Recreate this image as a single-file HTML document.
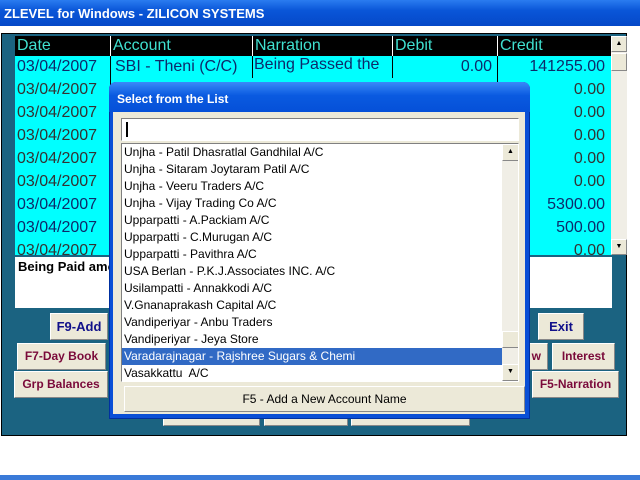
<!DOCTYPE html>
<html><head><style>
*{margin:0;padding:0;box-sizing:border-box}
body{width:640px;height:480px;position:relative;overflow:hidden;background:#fff;font-family:"Liberation Sans",sans-serif}
.a{position:absolute}
.title{left:0;top:0;width:640px;height:26px;background:linear-gradient(#2a7cf0,#0a56d8 40%,#0548c8);color:#fff;font-weight:bold;font-size:13px;padding:6px 0 0 4px}
.panel{left:1px;top:33px;width:626px;height:403px;background:#1b6381;border:1px solid #000}
.grid{left:15px;top:36px;width:596px;height:219px;background:#00ffff;overflow:hidden}
.hd{top:0;height:20px;background:#000;color:#40e0d0;font-size:16px;padding:1px 0 0 2px;border-left:1px solid #fff}
.c{font-size:16px;color:#0d2a6a}
.btn{background:#ece9d8;border:1px solid;border-color:#fff #888 #888 #fff;font-weight:bold;font-size:12px;text-align:center;color:#7a0a3a}
.sb{background:#f0eee6}
.arr{background:#ece9d8;border:1px solid;border-color:#fff #888 #888 #fff;font-size:7px;text-align:center;line-height:14px}
.li{left:0;width:380px;height:17px;font-size:12px;padding:1px 0 0 2px;color:#000;white-space:nowrap}
</style></head><body>
<div class="a title">ZLEVEL for Windows - ZILICON SYSTEMS</div>
<div class="a panel"></div>
<div class="a grid">
 <div class="a hd" style="left:0;width:95px;border-left:0">Date</div>
 <div class="a hd" style="left:95px;width:142px">Account</div>
 <div class="a hd" style="left:237px;width:140px">Narration</div>
 <div class="a hd" style="left:377px;width:105px">Debit</div>
 <div class="a hd" style="left:482px;width:114px">Credit</div>
 <div class="a" style="left:95px;top:20px;width:1px;height:199px;background:#000"></div>
 <div class="a" style="left:237px;top:20px;width:1px;height:22px;background:#000"></div>
 <div class="a" style="left:377px;top:20px;width:1px;height:22px;background:#000"></div>
 <div class="a" style="left:482px;top:20px;width:1px;height:199px;background:#000"></div>
 <div class="a c" style="left:2px;top:22px">03/04/2007</div>
 <div class="a c" style="left:100px;top:22px">SBI - Theni (C/C)</div>
 <div class="a c" style="left:239px;top:20px">Being Passed the</div>
 <div class="a c" style="left:377px;top:22px;width:100px;text-align:right">0.00</div>
 <div class="a c" style="left:482px;top:22px;width:108px;text-align:right">141255.00</div>
 <div class="a c" style="left:2px;top:45px;color:#333">03/04/2007</div>
 <div class="a c" style="left:2px;top:68px;color:#333">03/04/2007</div>
 <div class="a c" style="left:2px;top:91px;color:#333">03/04/2007</div>
 <div class="a c" style="left:2px;top:114px;color:#333">03/04/2007</div>
 <div class="a c" style="left:2px;top:137px;color:#333">03/04/2007</div>
 <div class="a c" style="left:2px;top:160px;color:#0d2a6a">03/04/2007</div>
 <div class="a c" style="left:2px;top:183px;color:#0d2a6a">03/04/2007</div>
 <div class="a c" style="left:2px;top:206px;color:#333">03/04/2007</div>
 <div class="a c" style="left:482px;top:45px;width:108px;text-align:right;color:#333">0.00</div>
 <div class="a c" style="left:482px;top:68px;width:108px;text-align:right;color:#333">0.00</div>
 <div class="a c" style="left:482px;top:91px;width:108px;text-align:right;color:#333">0.00</div>
 <div class="a c" style="left:482px;top:114px;width:108px;text-align:right;color:#333">0.00</div>
 <div class="a c" style="left:482px;top:137px;width:108px;text-align:right;color:#333">0.00</div>
 <div class="a c" style="left:482px;top:160px;width:108px;text-align:right">5300.00</div>
 <div class="a c" style="left:482px;top:183px;width:108px;text-align:right">500.00</div>
 <div class="a c" style="left:482px;top:206px;width:108px;text-align:right;color:#333">0.00</div>
</div>
<div class="a sb" style="left:611px;top:36px;width:16px;height:219px"></div>
<div class="a arr" style="left:611px;top:36px;width:16px;height:16px">▲</div>
<div class="a arr" style="left:611px;top:53px;width:16px;height:18px"></div>
<div class="a arr" style="left:611px;top:239px;width:16px;height:16px">▼</div>
<div class="a" style="left:15px;top:257px;width:597px;height:51px;background:#fff;font-weight:bold;font-size:13px;padding:2px 3px">Being Paid amount</div>
<div class="a btn" style="left:50px;top:313px;width:58px;height:27px;color:#10108a;font-size:13px;line-height:25px">F9-Add</div>
<div class="a btn" style="left:538px;top:313px;width:46px;height:27px;color:#10108a;font-size:13px;line-height:25px">Exit</div>
<div class="a btn" style="left:17px;top:343px;width:89px;height:27px;line-height:25px">F7-Day Book</div>
<div class="a btn" style="left:500px;top:343px;width:48px;height:27px;line-height:25px;text-align:right;padding-right:6px">w</div>
<div class="a btn" style="left:552px;top:343px;width:63px;height:27px;line-height:25px">Interest</div>
<div class="a btn" style="left:14px;top:371px;width:94px;height:27px;line-height:25px">Grp Balances</div>
<div class="a btn" style="left:532px;top:371px;width:87px;height:27px;line-height:25px">F5-Narration</div>
<div class="a btn" style="left:163px;top:398px;width:97px;height:28px"></div>
<div class="a btn" style="left:264px;top:398px;width:84px;height:28px"></div>
<div class="a btn" style="left:351px;top:398px;width:119px;height:28px"></div>
<!-- dialog -->
<div class="a" style="left:109px;top:82px;width:421px;height:337px;background:#0a4fd6;border-radius:7px 7px 0 0;border:1px solid #0030a0"></div>
<div class="a" style="left:109px;top:82px;width:421px;height:30px;background:linear-gradient(#3a8af8,#0a5ae0 45%,#0550d8);border-radius:7px 7px 0 0;color:#fff;font-weight:bold;font-size:12px;padding:10px 0 0 8px">Select from the List</div>
<div class="a" style="left:113px;top:112px;width:412px;height:302px;background:#ece9d8"></div>
<div class="a" style="left:121px;top:118px;width:398px;height:23px;background:#fff;border:1px solid;border-color:#808080 #fff #fff #808080"><div class="a" style="left:4px;top:3px;width:2px;height:15px;background:#000"></div></div>
<div class="a" style="left:121px;top:143px;width:398px;height:239px;background:#fff;border:1px solid;border-color:#808080 #fff #fff #808080;overflow:hidden">
 <div class="a li" style="top:0">Unjha - Patil Dhasratlal Gandhilal A/C</div>
 <div class="a li" style="top:17px">Unjha - Sitaram Joytaram Patil A/C</div>
 <div class="a li" style="top:34px">Unjha - Veeru Traders A/C</div>
 <div class="a li" style="top:51px">Unjha - Vijay Trading Co A/C</div>
 <div class="a li" style="top:68px">Upparpatti - A.Packiam A/C</div>
 <div class="a li" style="top:85px">Upparpatti - C.Murugan A/C</div>
 <div class="a li" style="top:102px">Upparpatti - Pavithra A/C</div>
 <div class="a li" style="top:119px">USA Berlan - P.K.J.Associates INC. A/C</div>
 <div class="a li" style="top:136px">Usilampatti - Annakkodi A/C</div>
 <div class="a li" style="top:153px">V.Gnanaprakash Capital A/C</div>
 <div class="a li" style="top:170px">Vandiperiyar - Anbu Traders</div>
 <div class="a li" style="top:187px">Vandiperiyar - Jeya Store</div>
 <div class="a li" style="top:204px;background:#316ac5;color:#fff">Varadarajnagar - Rajshree Sugars &amp; Chemi</div>
 <div class="a li" style="top:221px">Vasakkattu&nbsp; A/C</div>
 <div class="a sb" style="left:380px;top:0;width:17px;height:237px"></div>
 <div class="a arr" style="left:380px;top:0;width:17px;height:17px">▲</div>
 <div class="a arr" style="left:380px;top:187px;width:17px;height:17px"></div>
 <div class="a arr" style="left:380px;top:220px;width:17px;height:17px">▼</div>
</div>
<div class="a btn" style="left:124px;top:386px;width:401px;height:26px;color:#000;font-weight:normal;font-size:12px;line-height:24px">F5 - Add a New Account Name</div>
<div class="a" style="left:0;top:475px;width:640px;height:5px;background:#3a7ad8"></div>
</body></html>
